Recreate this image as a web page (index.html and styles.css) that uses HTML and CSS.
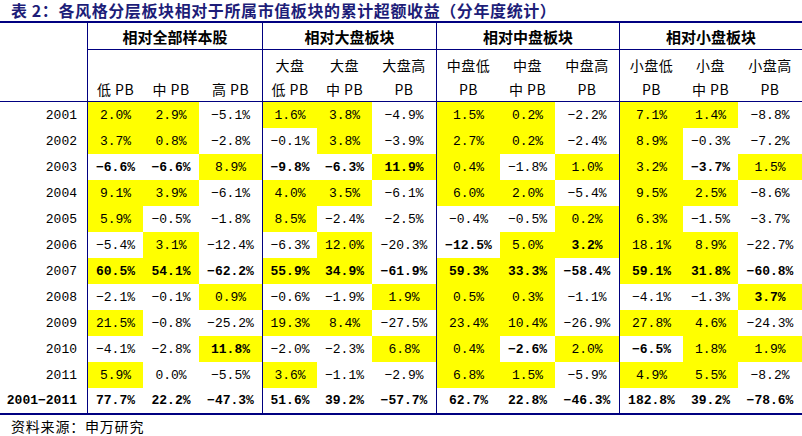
FILE: index.html
```html
<!DOCTYPE html>
<html lang="zh">
<head>
<meta charset="utf-8">
<title>各风格分层板块累计超额收益</title>
<link rel="stylesheet" href="styles.css">
</head>
<body>
<div class="page">
  <h1 class="title">表 2：各风格分层板块相对于所属市值板块的累计超额收益（分年度统计）</h1>
  <div class="grid">
    <div class="corner"></div>
    <div class="grp gs">相对全部样本股</div>
    <div class="grp gs">相对大盘板块</div>
    <div class="grp gs">相对中盘板块</div>
    <div class="grp gs">相对小盘板块</div>

    <div class="sub gs"><span class="l1"></span><span class="l2">低 PB</span></div>
    <div class="sub"><span class="l1"></span><span class="l2">中 PB</span></div>
    <div class="sub"><span class="l1"></span><span class="l2">高 PB</span></div>
    <div class="sub gs"><span class="l1">大盘</span><span class="l2">低 PB</span></div>
    <div class="sub"><span class="l1">大盘</span><span class="l2">中 PB</span></div>
    <div class="sub"><span class="l1">大盘高</span><span class="l2">PB</span></div>
    <div class="sub gs"><span class="l1">中盘低</span><span class="l2">PB</span></div>
    <div class="sub"><span class="l1">中盘</span><span class="l2">中 PB</span></div>
    <div class="sub"><span class="l1">中盘高</span><span class="l2">PB</span></div>
    <div class="sub gs"><span class="l1">小盘低</span><span class="l2">PB</span></div>
    <div class="sub"><span class="l1">小盘</span><span class="l2">中 PB</span></div>
    <div class="sub"><span class="l1">小盘高</span><span class="l2">PB</span></div>

    <div class="yr">2001</div>
    <div class="c gs y">2.0%</div><div class="c y">2.9%</div><div class="c">−5.1%</div>
    <div class="c gs y">1.6%</div><div class="c y">3.8%</div><div class="c">−4.9%</div>
    <div class="c gs y">1.5%</div><div class="c y">0.2%</div><div class="c">−2.2%</div>
    <div class="c gs y">7.1%</div><div class="c y">1.4%</div><div class="c">−8.8%</div>

    <div class="yr">2002</div>
    <div class="c gs y">3.7%</div><div class="c y">0.8%</div><div class="c">−2.8%</div>
    <div class="c gs">−0.1%</div><div class="c y">3.8%</div><div class="c">−3.9%</div>
    <div class="c gs y">2.7%</div><div class="c y">0.2%</div><div class="c">−2.4%</div>
    <div class="c gs y">8.9%</div><div class="c">−0.3%</div><div class="c">−7.2%</div>

    <div class="yr">2003</div>
    <div class="c gs b">−6.6%</div><div class="c b">−6.6%</div><div class="c y">8.9%</div>
    <div class="c gs b">−9.8%</div><div class="c b">−6.3%</div><div class="c y b">11.9%</div>
    <div class="c gs y">0.4%</div><div class="c">−1.8%</div><div class="c y">1.0%</div>
    <div class="c gs y">3.2%</div><div class="c b">−3.7%</div><div class="c y">1.5%</div>

    <div class="yr">2004</div>
    <div class="c gs y">9.1%</div><div class="c y">3.9%</div><div class="c">−6.1%</div>
    <div class="c gs y">4.0%</div><div class="c y">3.5%</div><div class="c">−6.1%</div>
    <div class="c gs y">6.0%</div><div class="c y">2.0%</div><div class="c">−5.4%</div>
    <div class="c gs y">9.5%</div><div class="c y">2.5%</div><div class="c">−8.6%</div>

    <div class="yr">2005</div>
    <div class="c gs y">5.9%</div><div class="c">−0.5%</div><div class="c">−1.8%</div>
    <div class="c gs y">8.5%</div><div class="c">−2.4%</div><div class="c">−2.5%</div>
    <div class="c gs">−0.4%</div><div class="c">−0.5%</div><div class="c y">0.2%</div>
    <div class="c gs y">6.3%</div><div class="c">−1.5%</div><div class="c">−3.7%</div>

    <div class="yr">2006</div>
    <div class="c gs">−5.4%</div><div class="c y">3.1%</div><div class="c">−12.4%</div>
    <div class="c gs">−6.3%</div><div class="c y">12.0%</div><div class="c">−20.3%</div>
    <div class="c gs b">−12.5%</div><div class="c y">5.0%</div><div class="c y b">3.2%</div>
    <div class="c gs y">18.1%</div><div class="c y">8.9%</div><div class="c">−22.7%</div>

    <div class="yr">2007</div>
    <div class="c gs y b">60.5%</div><div class="c y b">54.1%</div><div class="c b">−62.2%</div>
    <div class="c gs y b">55.9%</div><div class="c y b">34.9%</div><div class="c b">−61.9%</div>
    <div class="c gs y b">59.3%</div><div class="c y b">33.3%</div><div class="c b">−58.4%</div>
    <div class="c gs y b">59.1%</div><div class="c y b">31.8%</div><div class="c b">−60.8%</div>

    <div class="yr">2008</div>
    <div class="c gs">−2.1%</div><div class="c">−0.1%</div><div class="c y">0.9%</div>
    <div class="c gs">−0.6%</div><div class="c">−1.9%</div><div class="c y">1.9%</div>
    <div class="c gs y">0.5%</div><div class="c y">0.3%</div><div class="c">−1.1%</div>
    <div class="c gs">−4.1%</div><div class="c">−1.3%</div><div class="c y b">3.7%</div>

    <div class="yr">2009</div>
    <div class="c gs y">21.5%</div><div class="c">−0.8%</div><div class="c">−25.2%</div>
    <div class="c gs y">19.3%</div><div class="c y">8.4%</div><div class="c">−27.5%</div>
    <div class="c gs y">23.4%</div><div class="c y">10.4%</div><div class="c">−26.9%</div>
    <div class="c gs y">27.8%</div><div class="c y">4.6%</div><div class="c">−24.3%</div>

    <div class="yr">2010</div>
    <div class="c gs">−4.1%</div><div class="c">−2.8%</div><div class="c y b">11.8%</div>
    <div class="c gs">−2.0%</div><div class="c">−2.3%</div><div class="c y">6.8%</div>
    <div class="c gs y">0.4%</div><div class="c b">−2.6%</div><div class="c y">2.0%</div>
    <div class="c gs b">−6.5%</div><div class="c y">1.8%</div><div class="c y">1.9%</div>

    <div class="yr">2011</div>
    <div class="c gs y">5.9%</div><div class="c">0.0%</div><div class="c">−5.5%</div>
    <div class="c gs y">3.6%</div><div class="c">−1.1%</div><div class="c">−2.9%</div>
    <div class="c gs y">6.8%</div><div class="c y">1.5%</div><div class="c">−5.9%</div>
    <div class="c gs y">4.9%</div><div class="c y">5.5%</div><div class="c">−8.2%</div>

    <div class="yr b">2001−2011</div>
    <div class="c gs b">77.7%</div><div class="c b">22.2%</div><div class="c b">−47.3%</div>
    <div class="c gs b">51.6%</div><div class="c b">39.2%</div><div class="c b">−57.7%</div>
    <div class="c gs b">62.7%</div><div class="c b">22.8%</div><div class="c b">−46.3%</div>
    <div class="c gs b">182.8%</div><div class="c b">39.2%</div><div class="c b">−78.6%</div>
  </div>
  <p class="source">资料来源：申万研究</p>
</div>
</body>
</html>
```

FILE: styles.css
```css
html, body {
  margin: 0;
  padding: 0;
  background: #ffffff;
}

.page {
  width: 802px;
  height: 436px;
  overflow: hidden;
  font-family: "Liberation Sans", "Noto Sans CJK SC", sans-serif;
  color: #000;
}

.title {
  margin: 0;
  height: 21px;
  padding-left: 11px;
  font-family: "Noto Sans CJK SC", sans-serif;
  font-size: 16px;
  font-weight: 700;
  letter-spacing: 0.6px;
  line-height: 21px;
  color: #1d1d78;
  white-space: nowrap;
}

.grid {
  display: grid;
  grid-template-columns: 87px 56px 56px 63px 55px 55px 64px 64px 55px 64px 64px 55px 64px;
  grid-template-rows: 27px 52px repeat(11, 26px) 25px;
  border-top: 2px solid #000080;
  border-bottom: 2px solid #000080;
}

.grid > div {
  box-sizing: border-box;
}

.corner {
  grid-row: span 2;
  border-bottom: 1px solid #000080;
}

.gs {
  border-left: 1px solid #000080;
}

.grp {
  grid-column: span 3;
  border-bottom: 1px solid #000080;
  font-family: "Noto Sans CJK SC", sans-serif;
  font-weight: 700;
  font-size: 15px;
  display: flex;
  align-items: center;
  justify-content: center;
  padding-top: 1px;
}

.sub {
  border-bottom: 1px solid #000080;
  display: flex;
  flex-direction: column;
  align-items: center;
  padding-top: 3px;
  font-family: "Noto Sans CJK SC", sans-serif;
  font-size: 14px;
  letter-spacing: 0.5px;
}

.sub .l1,
.sub .l2 {
  display: block;
  height: 24px;
  line-height: 24px;
  white-space: nowrap;
}

.yr,
.c {
  font-family: "Liberation Mono", monospace;
  font-size: 13px;
  display: flex;
  align-items: center;
  white-space: nowrap;
}

.yr {
  justify-content: flex-end;
  padding-right: 10px;
}

.c {
  justify-content: center;
}

.y {
  background: #ffff00;
}

.b {
  font-weight: 700;
}

.source {
  margin: 0;
  padding: 3px 0 0 11px;
  font-family: "Noto Sans CJK SC", sans-serif;
  font-size: 14px;
  letter-spacing: 0.8px;
  line-height: 17px;
}
```
